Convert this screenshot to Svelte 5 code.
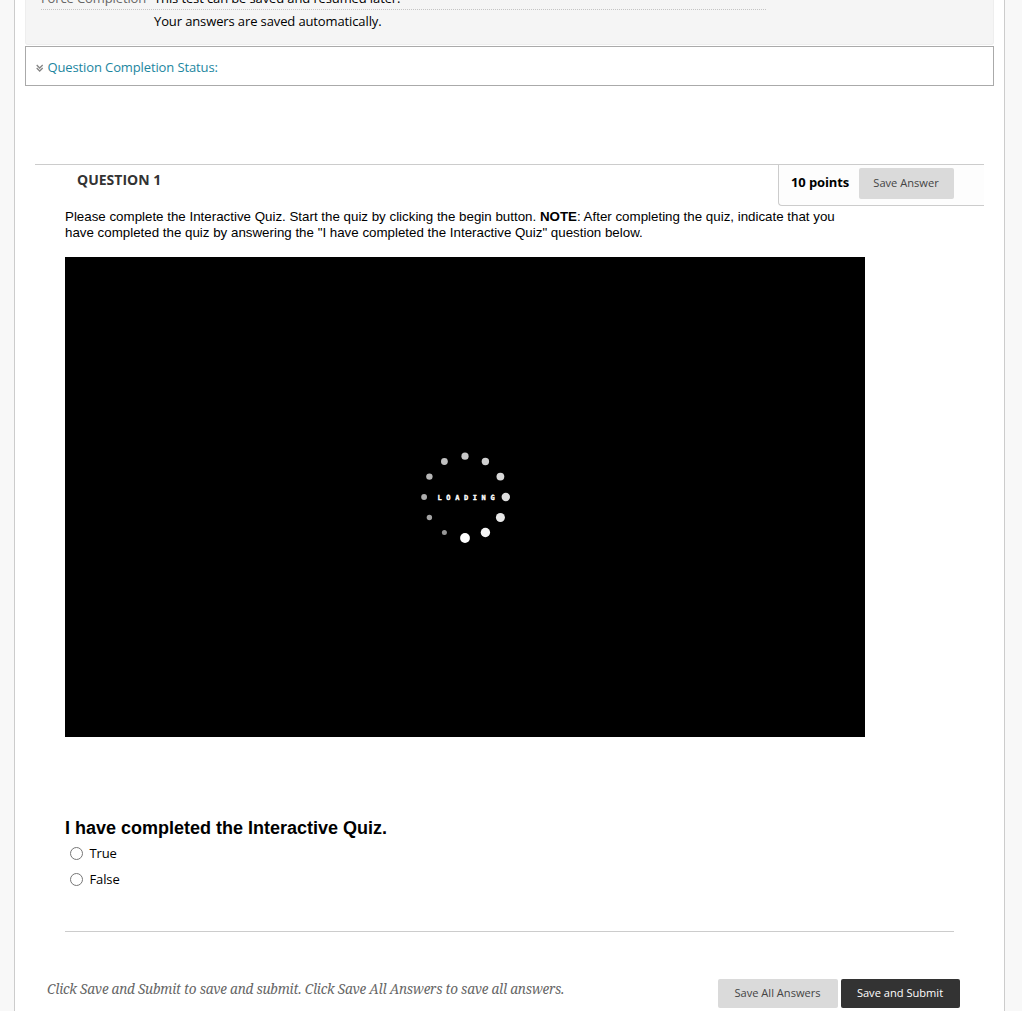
<script>
  // Spinner dots, clockwise from the top: centre, radius and brightness
  const dots = [
    [55, 16.2, 3.6, '#c8c8c8'],
    [75.4, 21.5, 3.7, '#d0d0d0'],
    [90.4, 36.6, 3.9, '#d8d8d8'],
    [95.8, 57, 4.2, '#dedede'],
    [90.4, 77.5, 4.5, '#e8e8e8'],
    [75.4, 92.5, 4.7, '#f4f4f4'],
    [55, 98, 4.9, '#ffffff'],
    [34.4, 92.5, 2.5, '#979797'],
    [19.4, 77.5, 2.7, '#a3a3a3'],
    [14.1, 57, 2.9, '#adadad'],
    [19.4, 36.6, 3.2, '#b7b7b7'],
    [34.4, 21.5, 3.4, '#c0c0c0']
  ];
  let answer = $state('');
</script>

<div class="page">
  <main>
    <section class="info">
      <div class="row first">
        <span class="label">Force Completion</span>
        <span class="saved">This test can be saved and resumed later.</span>
      </div>
      <div class="row"><span class="label"></span><span class="auto">Your answers are saved automatically.</span></div>
    </section>

    <section class="status">
      <svg width="8" height="8" viewBox="0 0 8 8" fill="none" stroke="#858585" stroke-width="1.3">
        <path d="M.7 1 3.7 4 6.7 1M.7 4 3.7 7 6.7 4" />
      </svg>
      <a href="#status">Question Completion Status:</a>
    </section>

    <section class="question">
      <header>
        <h2>QUESTION 1</h2>
        <div class="points"><b>10 points</b><button class="btn answer"><span>Save Answer</span></button></div>
      </header>

      <p class="prompt">
        <span class="l1">Please complete the Interactive Quiz. Start the quiz by clicking the begin button. <b>NOTE</b>: After completing the quiz, indicate that you</span><br />
        <span class="l2">have completed the quiz by answering the "I have completed the Interactive Quiz" question below.</span>
      </p>

      <div class="player">
        <svg width="110" height="114" viewBox="0 0 110 114">
          {#each dots as [x, y, r, fill]}
            <circle cx={x} cy={y} {r} {fill} />
          {/each}
          <text x="27.5" y="60" textLength="57" lengthAdjust="spacing">LOADING</text>
        </svg>
      </div>

      <h3><span>I have completed the Interactive Quiz.</span></h3>
      <div class="options">
        <label><input type="radio" name="q1" value="true" bind:group={answer} /><span>True</span></label>
        <label><input type="radio" name="q1" value="false" bind:group={answer} /><span>False</span></label>
      </div>
    </section>

    <footer>
      <p><em>Click Save and Submit to save and submit. Click Save All Answers to save all answers.</em></p>
      <div class="actions">
        <button class="btn all"><span>Save All Answers</span></button>
        <button class="btn submit"><span>Save and Submit</span></button>
      </div>
    </footer>
  </main>
</div>

<style>
  :global(body) {
    margin: 0;
    overflow: hidden;
    background: #f8f8f8;
  }
  .page {
    height: 1011px;
    overflow: hidden;
    padding: 0 17px 0 14px;
    font: 13px/18px 'Open Sans', sans-serif;
    letter-spacing: -0.12px;
    color: #000;
  }
  main {
    box-sizing: border-box;
    height: 1011px;
    border: solid #ccc;
    border-width: 0 1px;
    background: #fff;
    padding: 0 10px;
  }
  .info {
    box-sizing: border-box;
    height: 45px;
    border: solid #eee;
    border-width: 0 1px 1px;
    border-radius: 0 0 3px 3px;
    background: #f5f5f5;
    padding: 0 15px;
    overflow: hidden;
  }
  .row {
    display: flex;
    width: 725px;
    height: 23px;
    line-height: 23px;
    white-space: nowrap;
  }
  .row.first {
    box-sizing: border-box;
    height: 10px;
    align-items: flex-end;
    border-bottom: 1px dotted #c4c4c4;
    line-height: 22px;
  }
  .label {
    width: 113px;
    color: #666;
  }
  .status {
    box-sizing: border-box;
    display: flex;
    align-items: center;
    gap: 4px;
    height: 40px;
    margin-top: 1px;
    border: 1px solid #aaa;
    padding: 2px 10px 0 9.5px;
  }
  .status svg {
    margin-top: 1px;
  }
  .status a {
    color: #1c86a0;
    text-decoration: none;
  }
  .question {
    margin: 78px 10px 0;
    border-top: 1px solid #ccc;
  }
  header {
    display: flex;
    justify-content: space-between;
    align-items: flex-start;
    height: 44px;
  }
  h2 {
    margin: 6px 0 0 42px;
    font-size: 14px;
    line-height: 18px;
    letter-spacing: 0;
    color: #333;
  }
  .points {
    box-sizing: border-box;
    display: flex;
    justify-content: space-between;
    width: 206px;
    height: 41px;
    border: solid #ccc;
    border-width: 0 0 1px 1px;
    border-radius: 0 0 0 4px;
    padding: 3px 30px 0 12px;
    background: #fdfdfd;
    line-height: 29px;
  }
  .btn {
    box-sizing: border-box;
    border: 0;
    border-radius: 2px;
    padding: 0 1px 2px 0;
    background: #dadada;
    color: #444;
    font: 11.1px/18px 'Open Sans', sans-serif;
    white-space: nowrap;
  }
  .btn.answer {
    width: 95px;
    height: 31px;
  }
  .prompt {
    margin: 0 0 0 30px;
    font: 13.333px/16px 'Liberation Sans', Arial, sans-serif;
    letter-spacing: 0;
    white-space: nowrap;
  }
  .player {
    display: flex;
    justify-content: center;
    align-items: center;
    width: 800px;
    height: 480px;
    margin: 16px 0 0 30px;
    background: #000;
  }
  .player text {
    fill: #fff;
    stroke: #fff;
    stroke-width: 0.35px;
    font: bold 7px 'DejaVu Sans Mono', monospace;
  }
  h3 {
    margin: 81px 0 0 30px;
    font: bold 18px/21px 'Liberation Sans', Arial, sans-serif;
    letter-spacing: 0;
  }
  .options {
    height: 91px;
    margin: 1px 30px 0;
    border-bottom: 1px solid #ccc;
  }
  label {
    display: flex;
    align-items: center;
    height: 26px;
  }
  input {
    width: 13px;
    height: 13px;
    margin: 0 6.5px 0 5px;
  }
  footer {
    display: flex;
    justify-content: space-between;
    margin: 47px 34px 0 22px;
  }
  footer p {
    margin: 0;
    font: 13.5px/20px Georgia, 'Noto Serif', 'DejaVu Serif', serif;
    letter-spacing: -0.22px;
    color: #666;
    white-space: nowrap;
  }
  .actions {
    display: flex;
    gap: 3px;
  }
  .btn.all {
    width: 120px;
    height: 29px;
  }
  .btn.submit {
    width: 119px;
    height: 29px;
    background: #333;
    color: #fff;
  }
</style>
